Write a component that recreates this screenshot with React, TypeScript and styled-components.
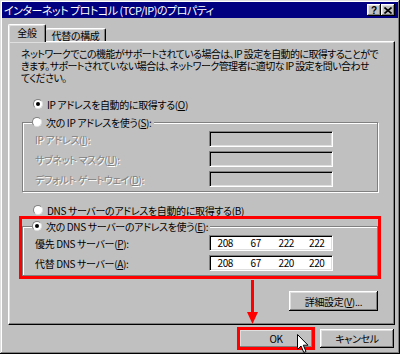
import React from 'react';
import styled, { createGlobalStyle, css } from 'styled-components';

const GlobalStyle = createGlobalStyle`
  html, body {
    margin: 0;
    padding: 0;
    background: #c0c0c0;
  }
  body {
    font-family: "Noto Sans CJK JP", "Noto Sans", sans-serif;
    font-size: 10px;
    font-feature-settings: "palt";
    letter-spacing: -0.35px;
    color: #000;
  }
  * {
    box-sizing: border-box;
  }
`;

const raised = css`
  box-shadow: inset -1px -1px #000, inset 1px 1px #fff, inset -2px -2px #808080,
    inset 2px 2px #dfdfdf;
`;

export default function App() {
  return (
    <>
      <GlobalStyle />
      <Window>
        <TitleBar>
          <TitleText>インターネット プロトコル (TCP/IP)のプロパティ</TitleText>
          <TitleButton>?</TitleButton>
          <TitleButton>
            <svg width="8" height="7" viewBox="0 0 8 7">
              <path d="M0.5 0.5 L7.5 6.5 M7.5 0.5 L0.5 6.5" stroke="#000" strokeWidth="1.6" />
            </svg>
          </TitleButton>
        </TitleBar>

        <TabStrip>
          <Tab $active>全般</Tab>
          <Tab>代替の構成</Tab>
        </TabStrip>

        <Panel>
          <Description>
            ネットワークでこの機能がサポートされている場合は、IP 設定を自動的に取得することがで
            <br />
            きます。サポートされていない場合は、ネットワーク管理者に適切な IP 設定を問い合わせ
            <br />
            てください。
          </Description>

          <RadioRow $mt={13}>
            <Radio $checked />
            <span>
              IP アドレスを自動的に取得する(<Key>O</Key>)
            </span>
          </RadioRow>

          <GroupBox $mt={4}>
            <GroupLegend>
              <LegendInner>
                <Radio />
                <span>
                  次の IP アドレスを使う(<Key>S</Key>):
                </span>
              </LegendInner>
            </GroupLegend>
            <FieldRow>
              <FieldLabel $disabled>
                IP アドレス(<Key>I</Key>):
              </FieldLabel>
              <IpBox $disabled />
            </FieldRow>
            <FieldRow>
              <FieldLabel $disabled>
                サブネット マスク(<Key>U</Key>):
              </FieldLabel>
              <IpBox $disabled />
            </FieldRow>
            <FieldRow>
              <FieldLabel $disabled>
                デフォルト ゲートウェイ(<Key>D</Key>):
              </FieldLabel>
              <IpBox $disabled />
            </FieldRow>
          </GroupBox>

          <RadioRow $mt={11}>
            <Radio />
            <span>
              DNS サーバーのアドレスを自動的に取得する(<Key>B</Key>)
            </span>
          </RadioRow>

          <GroupBox $mt={2} $highlight>
            <GroupLegend>
              <LegendInner>
                <Radio $checked />
                <span>
                  次の DNS サーバーのアドレスを使う(<Key>E</Key>):
                </span>
              </LegendInner>
            </GroupLegend>
            <FieldRow>
              <FieldLabel>
                優先 DNS サーバー(<Key>P</Key>):
              </FieldLabel>
              <IpBox>
                {['208', '67', '222', '222'].map((o, i) => (
                  <Octet key={i}>{o}</Octet>
                ))}
              </IpBox>
            </FieldRow>
            <FieldRow>
              <FieldLabel>
                代替 DNS サーバー(<Key>A</Key>):
              </FieldLabel>
              <IpBox>
                {['208', '67', '220', '220'].map((o, i) => (
                  <Octet key={i}>{o}</Octet>
                ))}
              </IpBox>
            </FieldRow>
          </GroupBox>

          <AdvancedButton>
            詳細設定(<Key>V</Key>)...
          </AdvancedButton>
        </Panel>

        <ButtonRow>
          <Button $highlight>OK</Button>
          <Button>キャンセル</Button>
        </ButtonRow>

        <Arrow width="13" height="46" viewBox="0 0 13 46">
          <rect x="5" y="0" width="3" height="34" fill="#f00" />
          <polygon points="1,32 12,32 6.5,44" fill="#f00" />
        </Arrow>

        <Cursor width="13" height="20" viewBox="0 0 13 20">
          <path
            d="M0.5 0.5 L0.5 15.5 L4 12 L6.8 18.5 L9 17.5 L6.3 11.2 L11 11.2 Z"
            fill="#fff"
            stroke="#000"
            strokeWidth="1"
            strokeLinejoin="miter"
          />
        </Cursor>
      </Window>
    </>
  );
}

const Window = styled.div`
  position: relative;
  width: 400px;
  height: 354px;
  padding: 2px;
  background: #c0c0c0;
  box-shadow: inset -1px -1px #000, inset 1px 1px #dfdfdf, inset -2px -2px #808080,
    inset 2px 2px #fff;
  display: flex;
  flex-direction: column;
  overflow: hidden;
`;

const TitleBar = styled.div`
  height: 16px;
  background: #000080;
  display: flex;
  align-items: center;
  padding: 0 3px 0 2px;
  color: #fff;
`;

const TitleText = styled.span`
  flex: 1;
  font-size: 11px;
  line-height: 16px;
  letter-spacing: -0.5px;
  white-space: nowrap;
`;

const TitleButton = styled.span`
  width: 14px;
  height: 12px;
  display: flex;
  align-items: center;
  justify-content: center;
  background: #c0c0c0;
  color: #000;
  font-family: "Liberation Sans", sans-serif;
  font-weight: bold;
  font-size: 10px;
  letter-spacing: 0;
  ${raised}
`;

const TabStrip = styled.div`
  display: flex;
  align-items: flex-start;
  height: 18px;
  margin: 6px 0 -1px 6px;
  position: relative;
  z-index: 1;
`;

const Tab = styled.div<{ $active?: boolean }>`
  display: flex;
  align-items: center;
  justify-content: center;
  background: #c0c0c0;
  border-top: 1px solid #fff;
  border-right: 1px solid #000;
  border-radius: 2px 2px 0 0;
  white-space: nowrap;
  ${({ $active }) =>
    $active
      ? css`
          width: 38px;
          height: 18px;
          padding-bottom: 2px;
          border-left: 1px solid #fff;
          box-shadow: inset -1px 0 #808080, inset 1px 1px #dfdfdf;
        `
      : css`
          width: 60px;
          height: 13px;
          margin-top: 4px;
          box-shadow: inset -1px 0 #808080, inset 0 1px #dfdfdf;
        `}
`;

const Panel = styled.div`
  margin-left: 6px;
  width: 387px;
  height: 284px;
  border: 1px solid;
  border-color: #fff #000 #000 #fff;
  box-shadow: inset -1px -1px #808080, inset 1px 1px #dfdfdf;
  padding: 6px 16px 0 12px;
  display: flex;
  flex-direction: column;
`;

const Description = styled.p`
  margin: 0;
  line-height: 12px;
  letter-spacing: -0.6px;
  white-space: nowrap;
`;

const Key = styled.span`
  text-decoration: underline;
`;

const RadioRow = styled.div<{ $mt: number }>`
  display: flex;
  align-items: center;
  gap: 4px;
  height: 14px;
  padding-left: 12px;
  margin-top: ${({ $mt }) => $mt}px;
  white-space: nowrap;
`;

const Radio = styled.span<{ $checked?: boolean }>`
  position: relative;
  flex: none;
  width: 10px;
  height: 10px;
  border-radius: 50%;
  background: #fff;
  border: 1px solid;
  border-color: #808080 #dfdfdf #dfdfdf #808080;
  &::after {
    content: '';
    position: absolute;
    left: 2px;
    top: 2px;
    width: 4px;
    height: 4px;
    border-radius: 50%;
    background: #000;
    display: ${({ $checked }) => ($checked ? 'block' : 'none')};
  }
`;

const GroupBox = styled.fieldset<{ $mt: number; $highlight?: boolean }>`
  margin: ${({ $mt }) => $mt}px 0 0 1px;
  padding: 2px 0 4px 0;
  min-width: 0;
  border: 1px solid #808080;
  box-shadow: inset 1px 1px #fff, 1px 1px #fff;
  ${({ $highlight }) =>
    $highlight &&
    css`
      outline: 3px solid #f00;
      outline-offset: 0;
    `}
`;

const GroupLegend = styled.legend`
  margin-left: 9px;
  padding: 0 2px 0 0;
  height: 14px;
  background: #c0c0c0;
`;

const LegendInner = styled.span`
  display: flex;
  align-items: center;
  gap: 4px;
  height: 14px;
  white-space: nowrap;
`;

const FieldRow = styled.div`
  display: flex;
  align-items: center;
  height: 16px;
  padding-left: 12px;
  & + & {
    margin-top: 4px;
  }
`;

const FieldLabel = styled.span<{ $disabled?: boolean }>`
  width: 174px;
  white-space: nowrap;
  ${({ $disabled }) =>
    $disabled &&
    css`
      color: #808080;
      text-shadow: 1px 1px #fff;
    `}
`;

const IpBox = styled.div<{ $disabled?: boolean }>`
  width: 124px;
  height: 16px;
  display: flex;
  align-items: center;
  background: ${({ $disabled }) => ($disabled ? '#c0c0c0' : '#fff')};
  border: 1px solid;
  border-color: #808080 #fff #fff #808080;
  box-shadow: inset 1px 1px #000, inset -1px -1px #dfdfdf;
`;

const Octet = styled.span`
  flex: 1;
  text-align: center;
  line-height: 14px;
`;

const PushButton = styled.button<{ $highlight?: boolean }>`
  display: flex;
  align-items: center;
  justify-content: center;
  background: #c0c0c0;
  border: none;
  padding: 0;
  color: #000;
  font: inherit;
  letter-spacing: inherit;
  white-space: nowrap;
  ${raised}
  ${({ $highlight }) =>
    $highlight &&
    css`
      outline: 3px solid #f00;
      outline-offset: -1px;
    `}
`;

const AdvancedButton = styled(PushButton)`
  align-self: flex-end;
  margin-top: 15px;
  width: 89px;
  height: 20px;
`;

const ButtonRow = styled.div`
  display: flex;
  justify-content: flex-end;
  gap: 7px;
  margin-top: 4px;
  padding-right: 4px;
`;

const Button = styled(PushButton)`
  width: 74px;
  height: 19px;
`;

const Arrow = styled.svg`
  position: absolute;
  left: 246px;
  top: 280px;
`;

const Cursor = styled.svg`
  position: absolute;
  left: 297px;
  top: 334px;
`;
